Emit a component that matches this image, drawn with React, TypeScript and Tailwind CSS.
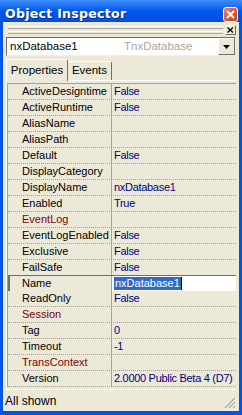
import React from 'react';

type Prop = { name: string; value?: string; kind?: 'event' };

const props: Prop[] = [
    { name: 'ActiveDesigntime', value: 'False' },
    { name: 'ActiveRuntime', value: 'False' },
    { name: 'AliasName' },
    { name: 'AliasPath' },
    { name: 'Default', value: 'False' },
    { name: 'DisplayCategory' },
    { name: 'DisplayName', value: 'nxDatabase1' },
    { name: 'Enabled', value: 'True' },
    { name: 'EventLog', kind: 'event' },
    { name: 'EventLogEnabled', value: 'False' },
    { name: 'Exclusive', value: 'False' },
    { name: 'FailSafe', value: 'False' },
    { name: 'Name', value: 'nxDatabase1' },
    { name: 'ReadOnly', value: 'False' },
    { name: 'Session', kind: 'event' },
    { name: 'Tag', value: '0' },
    { name: 'Timeout', value: '-1' },
    { name: 'TransContext', kind: 'event' },
    { name: 'Version', value: '2.0000 Public Beta 4 (D7)' },
];

const font = { fontFamily: '"Liberation Sans", Arial, sans-serif' };

function Row({ p }: { p: Prop }) {
    const selected = p.name === 'Name';
    if (selected) {
        return (
            <div className="flex h-[16px] border-t border-l-2 border-[#716F64] -mt-px">
                <div className="w-[102px] shrink-0 pl-[12px] leading-[15px] border-r border-[#A6A390] text-black">
                    {p.name}
                </div>
                <div className="flex-1 bg-white pl-[2px] leading-[15px] flex items-center">
                    <span className="bg-[#316AC5] text-white h-[13px] leading-[13px] px-px">{p.value}</span>
                    <span className="w-px h-[13px] bg-black" />
                </div>
            </div>
        );
    }
    return (
        <div className="flex h-[16px] border-b border-dotted border-[#A0A0A0]">
            <div
                className={`w-[104px] shrink-0 pl-[14px] leading-[15px] border-r border-[#A6A390] whitespace-nowrap ${
                    p.kind === 'event' ? 'text-[#800000]' : 'text-black'
                }`}
            >
                {p.name}
            </div>
            <div className="flex-1 pl-[2px] leading-[15px] text-[#000080] whitespace-nowrap tracking-[-0.3px]">
                {p.value}
            </div>
        </div>
    );
}

export default function App() {
    return (
        <div className="w-[242px] h-[415px] bg-[#0055E5] flex flex-col text-[11px] select-none overflow-hidden" style={font}>
            {/* Title bar */}
            <div className="h-[22px] shrink-0 flex items-center justify-between pt-[6px] pl-[5px] pr-[4px] bg-gradient-to-b from-[#3C8CF8] via-[#0058EE] to-[#0050DC]">
                <span
                    className="text-white font-bold text-[12.5px] tracking-[0.3px]"
                    style={{ fontFamily: '"DejaVu Sans", "Liberation Sans", sans-serif', textShadow: '1px 1px #0A2A8A' }}
                >
                    Object Inspector
                </span>
                <div className="w-[15px] h-[15px] rounded-[3px] border border-white bg-gradient-to-br from-[#E8805F] to-[#C5391A] flex items-center justify-center">
                    <svg width="9" height="9" viewBox="0 0 9 9">
                        <path d="M1 1 L8 8 M8 1 L1 8" stroke="white" strokeWidth="2" />
                    </svg>
                </div>
            </div>

            {/* Body */}
            <div className="flex-1 mx-[3px] mb-[4px] bg-[#ECE9D8] flex flex-col px-[3px]">
                {/* Gripper */}
                <div className="h-[14px] flex items-center gap-[2px] pt-[1px]">
                    <div className="flex-1 flex flex-col gap-[2px] pl-[2px]">
                        <div className="h-[3px] border-t border-b border-t-white border-b-[#ACA899]" />
                        <div className="h-[3px] border-t border-b border-t-white border-b-[#ACA899]" />
                    </div>
                    <div className="w-[11px] h-[10px] border border-t-white border-l-white border-r-[#716F64] border-b-[#716F64] flex items-center justify-center">
                        <svg width="7" height="6" viewBox="0 0 7 6">
                            <path d="M0.5 0.5 L6 5.5 M6 0.5 L0.5 5.5" stroke="black" strokeWidth="1.2" />
                        </svg>
                    </div>
                </div>

                {/* Combo */}
                <div className="mt-[1px] h-[19px] bg-white border border-t-[#716F64] border-l-[#716F64] border-r-[#F1EFE2] border-b-[#F1EFE2] flex items-center">
                    <span className="pl-[3px] w-[117px] text-black text-[11.5px]">nxDatabase1</span>
                    <span className="flex-1 text-[#ACA899] text-[11.5px]">TnxDatabase</span>
                    <div className="w-[17px] h-[17px] bg-[#ECE9D8] border border-t-white border-l-white border-r-[#716F64] border-b-[#716F64] flex items-center justify-center">
                        <svg width="7" height="4" viewBox="0 0 7 4">
                            <path d="M0 0 H7 L3.5 4 Z" fill="black" />
                        </svg>
                    </div>
                </div>

                {/* Tabs */}
                <div className="mt-[2px] h-[22px] flex items-end">
                    <div className="h-[22px] w-[62px] border-t border-l border-r border-t-white border-l-white border-r-[#716F64] rounded-t-[2px] flex items-center justify-center text-[11.5px] text-black relative z-10 bg-[#ECE9D8] -mb-px">
                        Properties
                    </div>
                    <div className="h-[19px] w-[44px] border-t border-r border-t-white border-r-[#716F64] rounded-tr-[2px] flex items-center justify-center text-[11.5px] text-black">
                        Events
                    </div>
                </div>

                {/* Grid */}
                <div className="border-t border-l border-t-white border-l-white pt-[2px]">
                    <div className="border-t border-l border-[#A6A390]">
                        {props.map((p) => (
                            <Row key={p.name} p={p} />
                        ))}
                    </div>
                </div>

                {/* Status bar */}
                <div className="mt-auto h-[22px] border-t border-t-white flex items-center justify-between relative">
                    <span className="text-[12px] text-black -ml-[1px]">All shown</span>
                    <svg width="12" height="12" viewBox="0 0 12 12" className="absolute right-0 bottom-[2px]">
                        <path d="M11 1 L1 11 M11 5 L5 11 M11 9 L9 11" stroke="#ACA899" strokeWidth="1.2" />
                        <path d="M12 2 L2 12 M12 6 L6 12 M12 10 L10 12" stroke="white" strokeWidth="1" />
                    </svg>
                </div>
            </div>
        </div>
    );
}
